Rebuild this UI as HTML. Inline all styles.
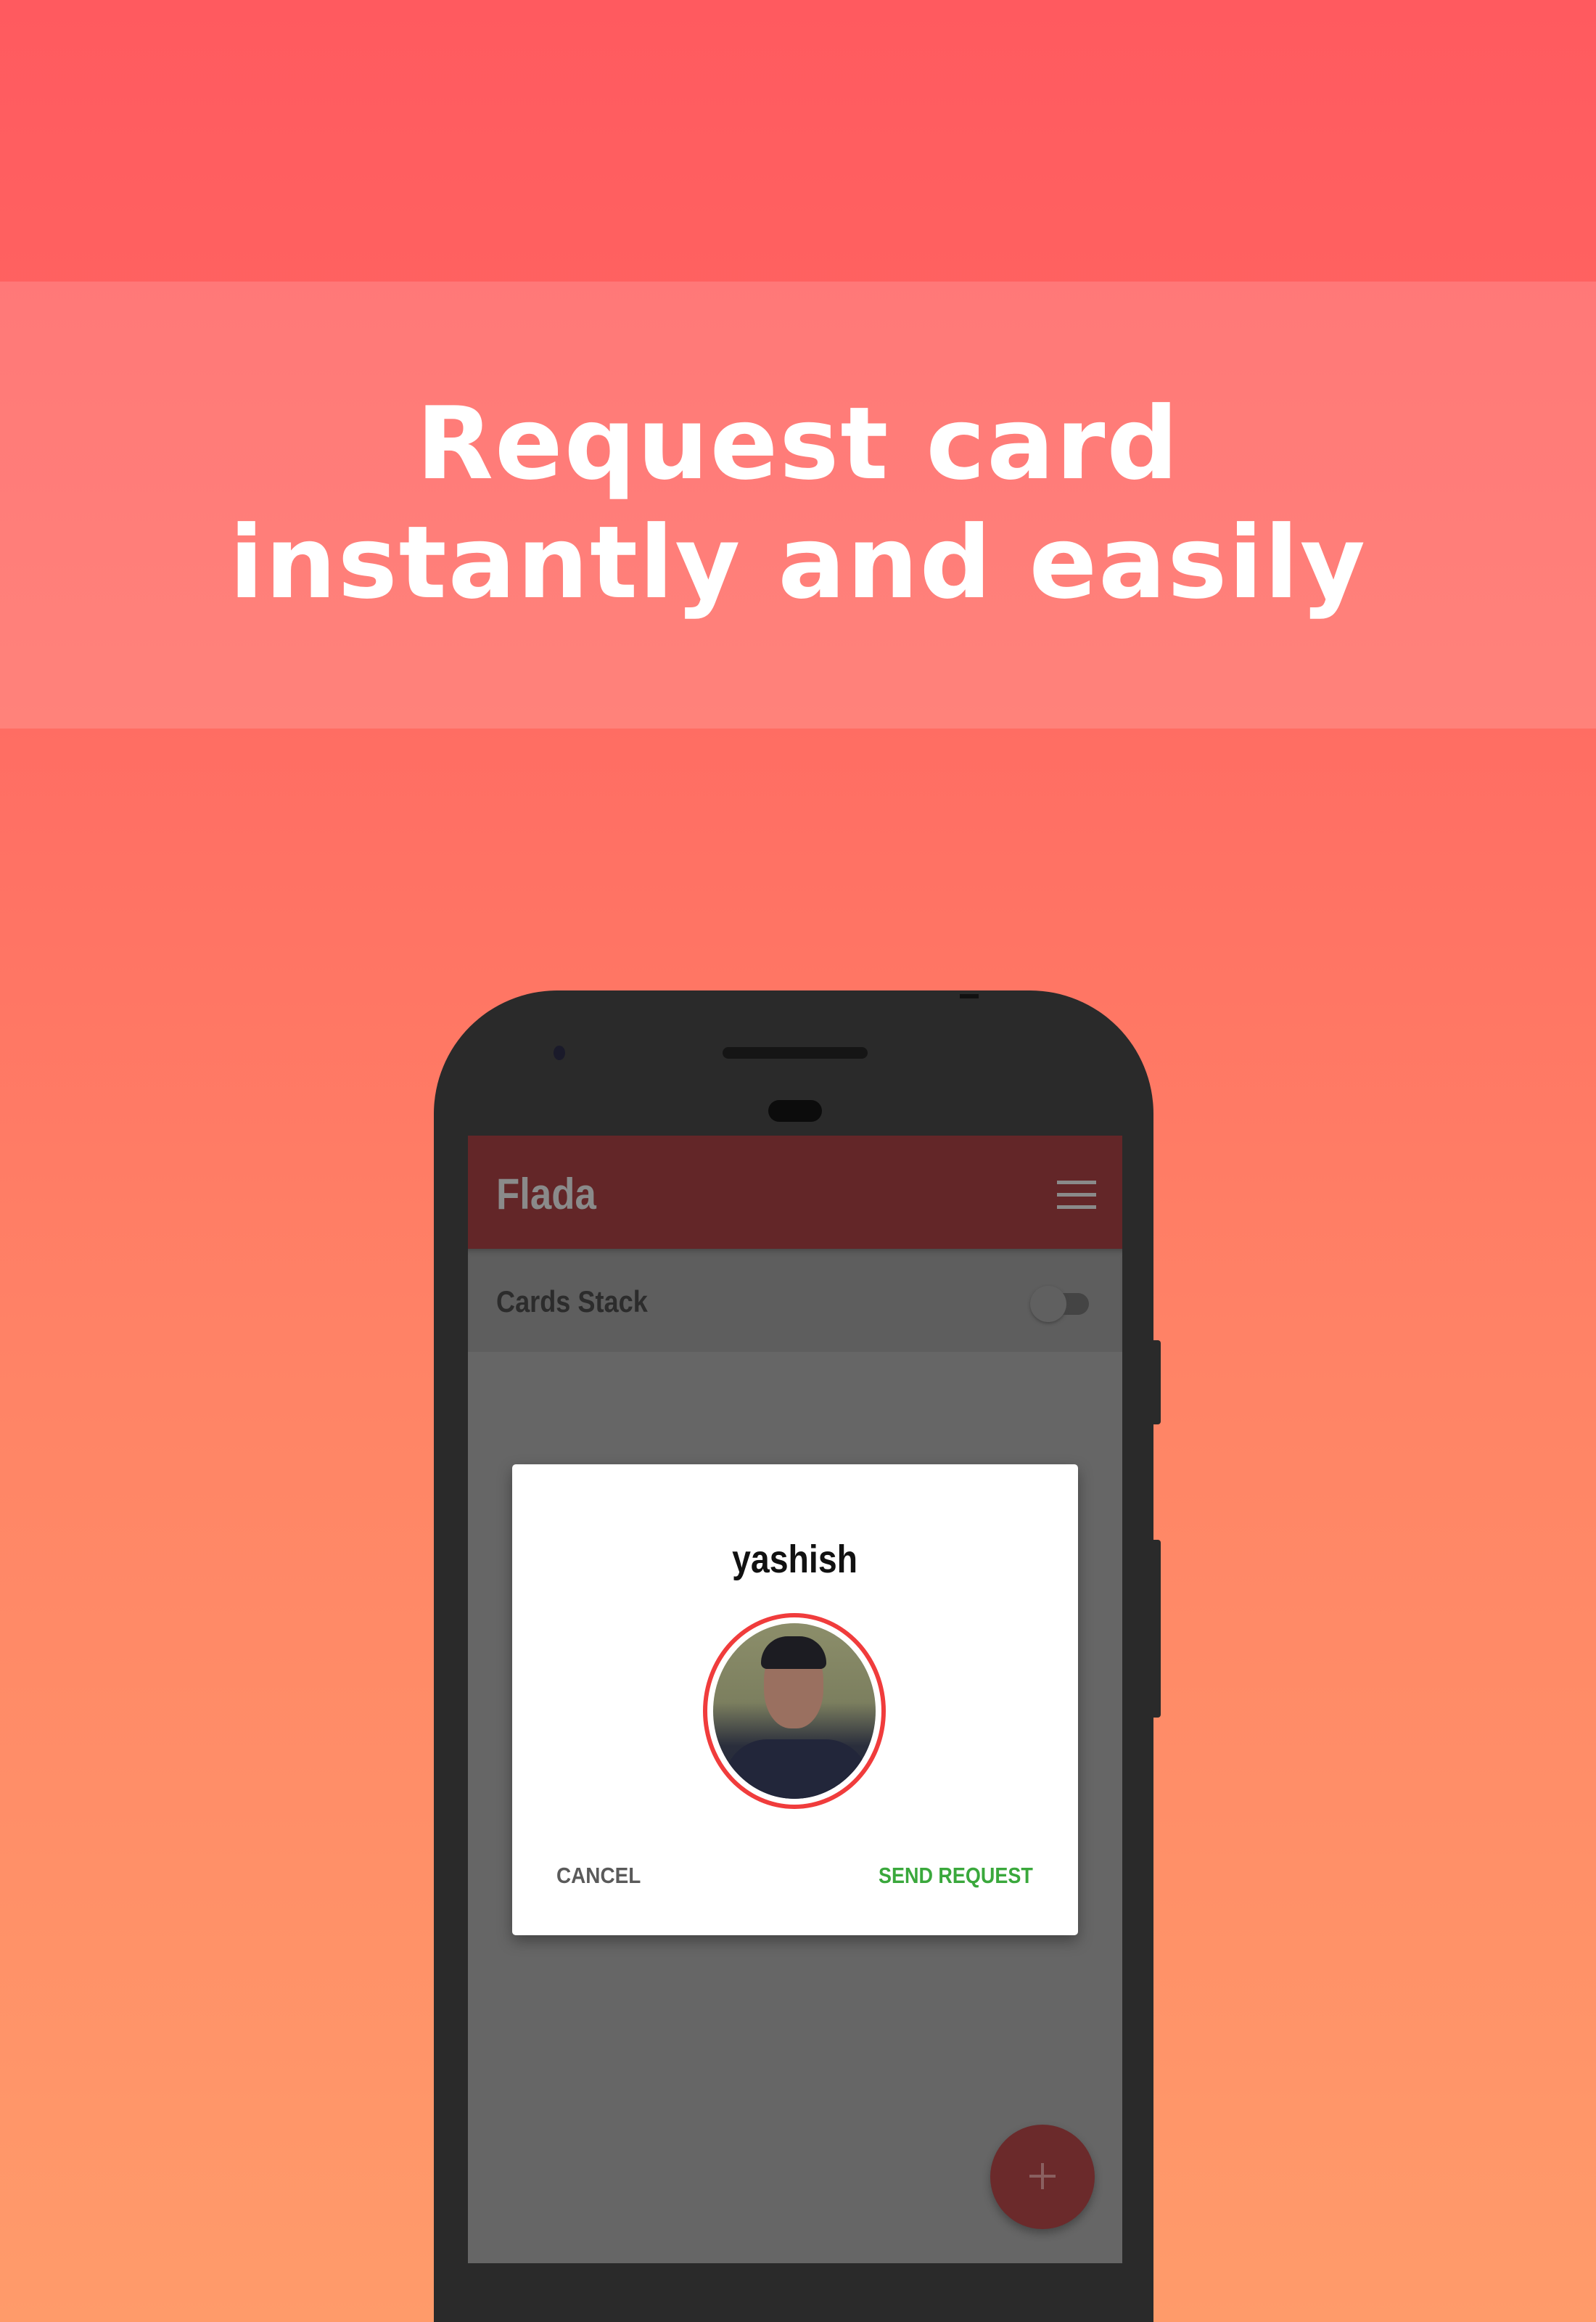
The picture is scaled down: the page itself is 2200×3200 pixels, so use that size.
<!DOCTYPE html>
<html><head><meta charset="utf-8"><style>
*{margin:0;padding:0;box-sizing:border-box}
html,body{width:2200px;height:3200px;overflow:hidden}
body{position:relative;font-family:"Liberation Sans",sans-serif}
.bg{position:absolute;left:0;top:0;width:2200px;height:3200px;background:linear-gradient(180deg,#ff5a5f 0%,#ff6c63 30%,#ff8466 60%,#ff9b6a 100%)}
.banner{position:absolute;left:0;top:388px;width:2200px;height:616px;background:rgba(255,255,255,0.15)}
.t{position:absolute;left:0;width:2200px;text-align:center;color:#fff;font-family:"DejaVu Sans",sans-serif;font-weight:bold;font-size:138px;line-height:160px;letter-spacing:2px}
.phone{position:absolute;left:598px;top:1365px;width:992px;height:1835px;background:#2a2a2a;border-radius:170px 170px 0 0}
.screen{position:absolute;left:645px;top:1565px;width:902px;height:1554px;background:#666;overflow:hidden}
.btn{position:absolute;left:1588px;width:12px;background:#2a2a2a;border-radius:0 4px 4px 0}
.c{display:inline-block;transform-origin:0 0}
</style></head><body>
<div class="bg"></div>
<div class="banner"></div>
<div class="t" style="top:532px">Request card</div>
<div class="t" style="top:696px">instantly and easily</div>
<div class="phone"></div>
<div class="btn" style="top:1847px;height:116px"></div>
<div class="btn" style="top:2122px;height:245px"></div>
<div style="position:absolute;left:1323px;top:1370px;width:26px;height:6px;background:#111"></div>
<div style="position:absolute;left:763px;top:1441px;width:16px;height:20px;border-radius:50%;background:#1a1a2a"></div>
<div style="position:absolute;left:996px;top:1443px;width:200px;height:16px;border-radius:8px;background:#151515"></div>
<div style="position:absolute;left:1059px;top:1516px;width:74px;height:30px;border-radius:15px;background:#0c0c0c"></div>
<div class="screen">
  <div style="position:absolute;left:0;top:0;width:902px;height:156px;background:#632628"></div>
  <div style="position:absolute;left:39px;top:46px;font-size:60px;color:#8a8a8a;font-weight:bold"><span class="c" style="transform:scaleX(0.88)">Flada</span></div>
  <div style="position:absolute;left:812px;top:62px;width:54px;height:5px;background:#8a8a8a;box-shadow:0 17px 0 #8a8a8a,0 34px 0 #8a8a8a"></div>
  <div style="position:absolute;left:0;top:156px;width:902px;height:142px;background:#5e5e5e;box-shadow:inset 0 8px 8px -6px #444"></div>
  <div style="position:absolute;left:39px;top:205px;font-size:42px;color:#2c2c2c;font-weight:bold"><span class="c" style="transform:scaleX(0.86)">Cards Stack</span></div>
  <div style="position:absolute;left:788px;top:217px;width:68px;height:30px;border-radius:15px;background:#444"></div>
  <div style="position:absolute;left:775px;top:207px;width:50px;height:50px;border-radius:50%;background:#606060;box-shadow:0 2px 4px #444"></div>
  <div style="position:absolute;left:61px;top:453px;width:780px;height:649px;background:#fff;border-radius:5px;box-shadow:0 8px 20px rgba(0,0,0,0.35)">
    <div style="position:absolute;left:0;width:780px;top:100px;text-align:center;font-size:54px;font-weight:bold;color:#111"><span style="display:inline-block;transform:scaleX(0.86)">yashish</span></div>
    <div style="position:absolute;left:263px;top:205px;width:252px;height:270px;border-radius:50%;border:6px solid #f03c3c;background:#fff;padding:8px">
      <div style="width:100%;height:100%;border-radius:50%;background:linear-gradient(180deg,#8c8e6a 0%,#7c7f5f 45%,#2a2e3c 70%,#232838 100%);position:relative;overflow:hidden">
        <div style="position:absolute;left:70px;top:25px;width:82px;height:120px;border-radius:45%;background:#9a7060"></div>
        <div style="position:absolute;left:66px;top:18px;width:90px;height:45px;border-radius:45px 45px 10px 10px;background:#1c1c22"></div>
        <div style="position:absolute;left:15px;top:160px;width:200px;height:120px;border-radius:60px 60px 0 0;background:#22263a"></div>
      </div>
    </div>
    <div style="position:absolute;left:61px;top:549px;font-size:31px;font-weight:bold;color:#5a5a5a"><span class="c" style="transform:scaleX(0.9)">CANCEL</span></div>
    <div style="position:absolute;left:505px;top:549px;font-size:31px;font-weight:bold;color:#3aa83c;white-space:nowrap"><span class="c" style="transform:scaleX(0.87)">SEND REQUEST</span></div>
  </div>
  <div style="position:absolute;left:720px;top:1363px;width:144px;height:144px;border-radius:50%;background:#6b2a2b;box-shadow:0 6px 12px rgba(0,0,0,0.3)"></div>
  <div style="position:absolute;left:774px;top:1432px;width:36px;height:4px;background:#8a6060"></div>
  <div style="position:absolute;left:790px;top:1416px;width:4px;height:36px;background:#8a6060"></div>
</div>
</body></html>
